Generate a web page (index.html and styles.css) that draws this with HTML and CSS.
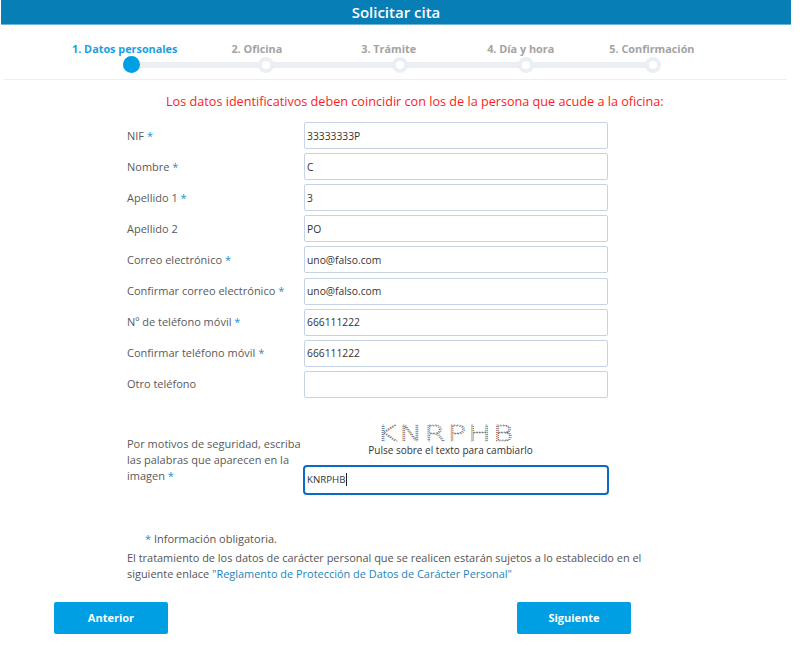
FILE: index.html
```html
<!DOCTYPE html>
<html lang="es">
<head>
<meta charset="utf-8">
<title>Solicitar cita</title>
<link rel="stylesheet" href="styles.css">
</head>
<body>
<header class="title-bar"><h1>Solicitar cita</h1></header>
<nav class="stepper">
  <div class="step-labels">
    <span class="step-label is-active">1. Datos personales</span>
    <span class="step-label">2. Oficina</span>
    <span class="step-label">3. Trámite</span>
    <span class="step-label">4. Día y hora</span>
    <span class="step-label">5. Confirmación</span>
  </div>
  <div class="step-track">
    <span class="dot is-active"></span>
    <span class="dot"></span>
    <span class="dot"></span>
    <span class="dot"></span>
    <span class="dot"></span>
  </div>
</nav>
<main class="content">
  <p class="warning">Los datos identificativos deben coincidir con los de la persona que acude a la oficina:</p>
  <form class="form">
    <div class="row"><label class="label">NIF <i>*</i></label><input class="field" value="33333333P"></div>
    <div class="row"><label class="label">Nombre <i>*</i></label><input class="field" value="C"></div>
    <div class="row"><label class="label">Apellido 1 <i>*</i></label><input class="field" value="3"></div>
    <div class="row"><label class="label">Apellido 2</label><input class="field" value="PO"></div>
    <div class="row"><label class="label">Correo electrónico <i>*</i></label><input class="field" value="uno@falso.com"></div>
    <div class="row"><label class="label">Confirmar correo electrónico <i>*</i></label><input class="field" value="uno@falso.com"></div>
    <div class="row"><label class="label">Nº de teléfono móvil <i>*</i></label><input class="field" value="666111222"></div>
    <div class="row"><label class="label">Confirmar teléfono móvil <i>*</i></label><input class="field" value="666111222"></div>
    <div class="row"><label class="label">Otro teléfono</label><input class="field" value=""></div>
    <div class="captcha-row">
      <label class="label captcha-label">Por motivos de seguridad, escriba las palabras que aparecen en la imagen <i>*</i></label>
      <div class="captcha-box">
        <svg class="captcha-word" width="135" height="21" viewBox="0 0 135 21"><text class="captcha-text" x="0" y="19">KNRPHB</text></svg>
        <div class="captcha-hint">Pulse sobre el texto para cambiarlo</div>
        <div class="field field-focus">KNRPHB<span class="caret"></span></div>
      </div>
    </div>
  </form>
  <p class="required"><i>*</i> Información obligatoria.</p>
  <p class="legal">El tratamiento de los datos de carácter personal que se realicen estarán sujetos a lo establecido en el siguiente enlace <a href="#">"Reglamento de Protección de Datos de Carácter Personal"</a></p>
  <div class="actions">
    <button class="btn" type="button">Anterior</button>
    <button class="btn" type="button">Siguiente</button>
  </div>
</main>
</body>
</html>
```
FILE: styles.css
```css
* { box-sizing: border-box; }
html, body { margin: 0; padding: 0; background: #fff; }
body { width: 800px; height: 662px; overflow: hidden; font-family: "Open Sans", "Noto Sans", sans-serif; color: #555; }
.title-bar { margin-left: 1px; width: 790px; height: 25px; background: #077eb6; border-bottom: 1px solid #6fb3d6; display: flex; align-items: center; justify-content: center; }
.title-bar h1 { margin: 0 0 1px; font-size: 15px; font-weight: 600; color: #fff; line-height: 24px; }
.stepper { margin: 0 0 0 4px; width: 783px; height: 55px; border-bottom: 1px solid #eceef1; position: relative; }
.step-labels { display: flex; padding: 17px 0 0 68px; height: 31px; }
.step-label { font-size: 10.85px; font-weight: 700; color: #a3a3a3; line-height: 14px; white-space: nowrap; }
.step-label.is-active { color: #1a9fdf; }
.step-label:nth-child(2) { margin-left: 54px; }
.step-label:nth-child(3) { margin-left: 79px; }
.step-label:nth-child(4) { margin-left: 71px; }
.step-label:nth-child(5) { margin-left: 55px; }
.step-track { display: flex; align-items: center; width: 530px; margin-left: 119px; height: 17px; background: linear-gradient(#ebeef2, #ebeef2) center / 100% 6px no-repeat; }
.dot { width: 16px; height: 16px; border-radius: 50%; background: #fff; border: 4px solid #ebeef2; flex: none; }
.dot.is-active { width: 17px; height: 17px; background: #009fe3; border: 0; }
.dot:nth-child(2) { margin-left: 118px; }
.dot:nth-child(3) { margin-left: 118px; }
.dot:nth-child(4) { margin-left: 110px; }
.dot:nth-child(5) { margin-left: 111px; }
.content { display: flex; flex-direction: column; }
.warning { margin: 13px 0 0 166px; font-size: 12.65px; line-height: 16px; color: #fb1c23; white-space: nowrap; }
.form { margin: 13px 0 0 127px; width: 481px; display: flex; flex-direction: column; gap: 4.12px; }
.row { display: flex; align-items: center; height: 27px; }
.label { width: 177px; flex: none; font-size: 11px; line-height: 16px; color: #5a5a5a; white-space: nowrap; }
.label i, .required i { font-style: normal; color: #1a93c9; }
.field { width: 304px; height: 27px; padding: 0 2px; border: 1px solid #c6d3e4; border-radius: 2px; background: #fff; font-family: "Open Sans", "Noto Sans", sans-serif; font-size: 10.3px; color: #333; outline: 0; }
.captcha-row { display: flex; margin-top: 20px; }
.captcha-label { padding-top: 14px; white-space: normal; line-height: 16px; padding-right: 2px; height: 62px; }
.captcha-box { width: 304px; display: flex; flex-direction: column; align-items: center; }
.captcha-word { display: block; margin-right: 23px; flex: none; overflow: visible; }
.captcha-text { font-family: "DejaVu Sans", sans-serif; font-weight: 200; font-size: 22px; letter-spacing: 1.4px; fill: none; stroke: #4a4a4a; stroke-width: .7; stroke-dasharray: 1 1; transform: scaleX(1.4); }
.captcha-hint { font-size: 10px; line-height: 14px; color: #333; margin-right: 11px; }
.field-focus { margin: 8px 0 0 -1px; align-self: flex-start; width: 306px; height: 30px; border: 2px solid #0a6bc4; border-radius: 4px; display: flex; align-items: center; color: #333; padding: 0 2px; font-size: 9.7px; }
.caret { width: 1px; height: 13px; background: #222; margin-left: 1px; }
.required { margin: 36px 0 0 145px; font-size: 11px; line-height: 16px; color: #555; }
.legal { margin: 3px 0 0 127px; width: 525px; font-size: 10.95px; line-height: 16px; color: #555; }
.legal a { color: #1a85bb; text-decoration: none; }
.actions { display: flex; justify-content: space-between; margin: 20px 0 0 54px; width: 577px; }
.btn { width: 114px; height: 32px; border: 0; border-radius: 2px; background: #009fe3; color: #fff; font-family: "Open Sans", "Noto Sans", sans-serif; font-size: 11px; font-weight: 700; }
```
